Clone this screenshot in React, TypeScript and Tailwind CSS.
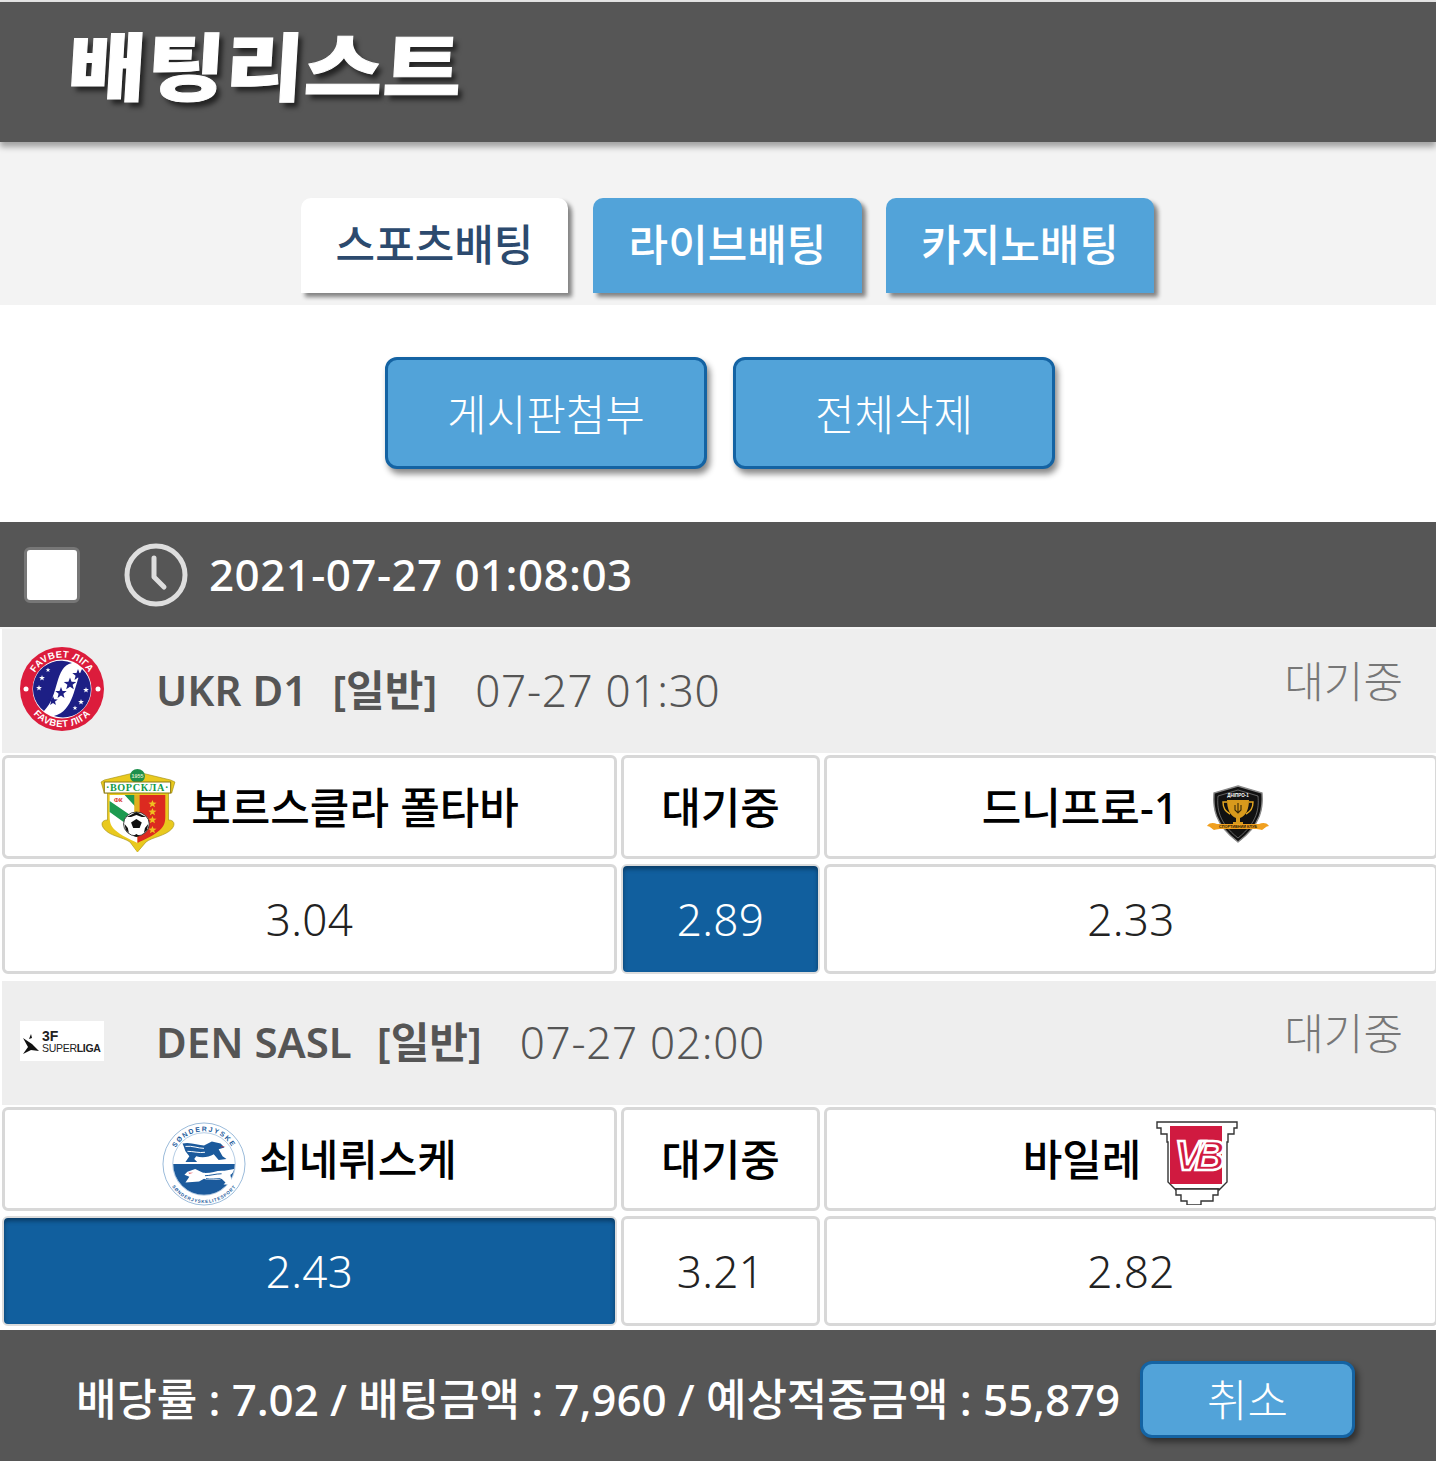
const star = (cx: number, cy: number, r: number) => {
  const pts: string[] = [];
  for (let i = 0; i < 10; i++) {
    const a = (Math.PI / 5) * i - Math.PI / 2;
    const d = i % 2 === 0 ? r : r * 0.42;
    pts.push(`${(cx + d * Math.cos(a)).toFixed(1)},${(cy + d * Math.sin(a)).toFixed(1)}`);
  }
  return pts.join(" ");
};

function FavbetLogo() {
  return (
    <svg width="84" height="84" viewBox="0 0 84 84">
      <defs>
        <path id="fav-top" d="M10.5 42a31.5 31.5 0 0 1 63 0" />
        <path id="fav-bottom" d="M4 42a38 38 0 0 0 76 0" />
      </defs>
      <circle cx="42" cy="42" r="42" fill="#dc1c3c" />
      <circle cx="42" cy="42" r="29.5" fill="#fff" />
      <path d="M24 64A28 28 0 0 1 52 16C34 20 40 48 24 64z" fill="#1d1f85" />
      <path d="M62 22A28 28 0 0 1 34 69C54 64 54 38 62 22z" fill="#1d1f85" />
      {[[33, 54, 5], [41, 46, 6], [50, 37, 6.5], [58, 28, 6]].map(([x, y, r]) => (
        <polygon key={x} points={star(x, y, r)} fill="#1d1f85" />
      ))}
      {[[22, 31, 3], [28, 23, 2.5], [19, 41, 3], [66, 43, 3], [61, 55, 3], [55, 61, 2.5]].map(([x, y, r]) => (
        <polygon key={x} points={star(x, y, r)} fill="#fff" />
      ))}
      <text fontFamily="Liberation Sans" fontSize="9.5" fontWeight="700" fill="#fff" letterSpacing="0.4">
        <textPath href="#fav-top" startOffset="50%" textAnchor="middle">FAVBET ЛІГА</textPath>
      </text>
      <text fontFamily="Liberation Sans" fontSize="9.5" fontWeight="700" fill="#fff" letterSpacing="0.4">
        <textPath href="#fav-bottom" startOffset="50%" textAnchor="middle">FAVBET ЛІГА</textPath>
      </text>
      <circle cx="6" cy="42" r="2.5" fill="#fff" />
      <circle cx="78" cy="42" r="2.5" fill="#fff" />
    </svg>
  );
}

function VorsklaLogo() {
  return (
    <svg width="76" height="84" viewBox="3 0 71 84" preserveAspectRatio="none">
      <path d="M7 12 38 4l31 8 4 2-3 11h-3v27c5 0 7 4 3 9-6 7-18 8-24 13l-8 10-7-10c-7-5-19-6-24-13-4-5-2-9 3-9V25H7L4 14z" fill="#e9c91e" stroke="#a08c10" strokeWidth="0.6" />
      <circle cx="38" cy="8" r="7" fill="#1d8f4c" />
      <text x="38" y="10" fontFamily="Liberation Sans" fontSize="5" fontWeight="700" fill="#d8e8c0" textAnchor="middle">1955</text>
      <rect x="7" y="14" width="62" height="11" fill="#fff" stroke="#8c7a10" strokeWidth="1" />
      <text x="38" y="23" fontFamily="Liberation Serif" fontSize="9.5" fontWeight="700" fill="#129a48" textAnchor="middle" letterSpacing="0.6">·ВОРСКЛА·</text>
      <path d="M12 27h26v48c-7-4-15-7-21-13-4-4-5-8-5-13z" fill="#fff" />
      <path d="M38 27h26v22c0 5-1 9-5 13-6 6-14 9-21 13z" fill="#dc2a20" />
      <path d="M12 33 38 52v12L12 44zM26 27h12v14z" fill="#1d9a50" />
      <rect x="35" y="27" width="5" height="18" fill="#e0b020" />
      {[36, 44, 52, 62].map((y) => (
        <polygon key={y} points={star(52, y, 4)} fill="#f0c020" />
      ))}
      <text x="20" y="34" fontFamily="Liberation Sans" fontSize="5.5" fontWeight="700" fill="#dc2a20" textAnchor="middle">ФК</text>
      <circle cx="37" cy="56" r="12" fill="#fff" stroke="#222" strokeWidth="0.8" />
      <polygon points="37,51 42,54.5 40,60 34,60 32,54.5" fill="#111" />
      <path d="M37 44v3l-5 2-4 0zM37 44v3l5 2 4 0zM26 56l3 4 1 5-3-3zM48 56l-3 4-1 5 3-3zM34 68l3-2 3 2-3 1z" fill="#111" />
      <path d="M38 84l-5-8h10z" fill="#e9c91e" />
    </svg>
  );
}

function DniproLogo() {
  return (
    <svg width="64" height="58" viewBox="0 0 64 58">
      <path d="M32 1 56 8c1 14 0 31-24 49C8 39 7 22 8 8z" fill="#111" stroke="#888" strokeWidth="1.4" />
      <path d="M32 5 52 11c1 12 0 26-20 42C12 37 11 23 12 11z" fill="none" stroke="#999" strokeWidth="0.6" />
      <text x="32" y="11.5" fontFamily="Liberation Sans" fontSize="4.5" fontWeight="700" fill="#fff" textAnchor="middle">ДНІПРО-1</text>
      <path d="M21 15h22c0 9-3 16-9 18v4h3v2H27v-2h3v-4c-6-2-9-9-9-18z" fill="#d89a1c" />
      <path d="M21 17h-4c0 6 3 10 7 12M43 17h4c0 6-3 10-7 12" fill="none" stroke="#e6a820" strokeWidth="1.4" />
      <path d="M32 18v10M29 20v5l3 3 3-3v-5" fill="none" stroke="#3a2a08" strokeWidth="1.1" />
      <path d="M1 41c3-4 7-3 10-2h42c3-1 7-2 10 2-3 0-5 3-7 4-3-1-5-1-7-1H15c-2 0-4 0-7 1-2-1-4-4-7-4z" fill="#f0a020" />
      <text x="32" y="43" fontFamily="Liberation Sans" fontSize="3.8" fontWeight="700" fill="#2a1a00" textAnchor="middle">СПОРТИВНИЙ КЛУБ</text>
    </svg>
  );
}

function SuperligaLogo() {
  return (
    <div className="flex h-10 w-[84px] items-center bg-white pl-0.5">
      <svg width="18" height="20" viewBox="0 0 18 20" className="mt-1.5 shrink-0">
        <path d="M1 4l9 6 7 7-8-1-8 4 5-7zM9 0l1 4-3 1z" fill="#111" />
      </svg>
      <div className="ml-0.5 flex flex-col font-['Liberation_Sans',sans-serif] text-[#222]">
        <span className="text-[14px] leading-[14px] font-black">3F</span>
        <span className="text-[10.5px] leading-[11px] tracking-[-0.3px]">SUPER<b>LIGA</b></span>
      </div>
    </div>
  );
}

function SonderjyskeLogo() {
  return (
    <svg width="84" height="84" viewBox="0 0 86 86">
      <defs>
        <path id="son-top" d="M9.5 43a33.5 33.5 0 0 1 67 0" />
        <path id="son-bottom" d="M3 43a40 40 0 0 0 80 0" />
      </defs>
      <circle cx="43" cy="43" r="42" fill="#fff" stroke="#7fa8d0" strokeWidth="0.8" />
      <circle cx="43" cy="43" r="32" fill="#fff" stroke="#7fa8d0" strokeWidth="0.6" />
      <path d="M11.5 43h63a31.5 31.5 0 0 1-63 0z" fill="#1b5a9c" />
      <path d="M21 22c8-2 16 2 22 2l8-4 9 2 4 4-6 2 4 7 4 3-8 1-5-6c-5 3-12 4-18 2l-2 3 3 3H24l4-6-4-5c-1-3-2-6-3-8z" fill="#1b5a9c" />
      <path d="M24 25c7-1 13 2 19 2M26 30c6 0 12 2 18 1" fill="none" stroke="#fff" strokeWidth="1" />
      <path d="M60 25h5l-4 1z" fill="#e0303a" />
      <path d="M64 50c-8-1-14 3-22 2l-8-4-8 3-3 3 5 2-4 6 14-1 5-3c6 2 14 2 18 0l4 4-2 2h-10 20l-2-5-1-5c2-1 3-3 4-6z" fill="#fff" />
      <path d="M61 53c-6 0-12 2-17 2M60 58c-5 0-10 1-15 0" fill="none" stroke="#1b5a9c" strokeWidth="1" />
      <path d="M27 52h5l-4 1z" fill="#e0303a" />
      <text fontFamily="Liberation Sans" fontSize="7" fontWeight="700" fill="#1b5a9c" letterSpacing="1.6">
        <textPath href="#son-top" startOffset="50%" textAnchor="middle">SØNDERJYSKE</textPath>
      </text>
      <text fontFamily="Liberation Sans" fontSize="4.6" fontWeight="700" fill="#1b5a9c" letterSpacing="0.8">
        <textPath href="#son-bottom" startOffset="50%" textAnchor="middle">SØNDERJYSKELITESPORT</textPath>
      </text>
    </svg>
  );
}

function VejleLogo() {
  return (
    <svg width="84" height="84" viewBox="0 0 84 84">
      <path d="M2 1h80v6h-3v6h-6v8h-1v40l-8 8v-1H21v1l-8-8V21h-1v-8H6V7H2z" fill="#fff" stroke="#333" strokeWidth="1.4" />
      <path d="M21 68h42v6h-5v6H46v4H32v-4H26v-6h-5z" fill="#fff" stroke="#333" strokeWidth="1.4" />
      <rect x="15" y="5" width="52" height="58" fill="#d01a40" />
      <text x="41" y="49" fontFamily="Liberation Sans" fontSize="42" fontWeight="700" fontStyle="italic" fill="#d01a40" stroke="#fff" strokeWidth="2.6" textAnchor="middle" letterSpacing="-8">VB</text>
    </svg>
  );
}

function ClockIcon() {
  return (
    <svg width="64" height="64" viewBox="0 0 64 64" fill="none" stroke="#dedede">
      <circle cx="32" cy="32" r="29" strokeWidth="5" />
      <path d="M30 15v19l10 10" strokeWidth="5" strokeLinecap="round" strokeLinejoin="round" />
    </svg>
  );
}

function Odd({ value, on }: { value: string; on?: boolean }) {
  return (
    <div
      className={
        on
          ? "flex h-[110px] items-center justify-center rounded-md border-2 border-[#dcdcdc] bg-[#115f9e] text-[44px] font-light tracking-[0.4px] text-white shadow-[inset_0_3px_4px_#0a3c66]"
          : "flex h-[110px] items-center justify-center rounded-md border-[3px] border-[#d8d8d8] bg-white text-[44px] font-light tracking-[0.4px] text-[#222]"
      }
    >
      {value}
    </div>
  );
}

function Team({ children }: { children: React.ReactNode }) {
  return (
    <div className="flex h-[104px] items-center justify-center rounded-md border-[3px] border-[#d8d8d8] bg-white pt-0.5 text-[43px] font-medium text-black">
      {children}
    </div>
  );
}

function League({ logo, name, time }: { logo: React.ReactNode; name: string; time: string }) {
  return (
    <div className="ml-0.5 flex h-[124px] items-start bg-[#eeeeee] pt-[18px] pl-[18px]">
      <div className="flex h-[84px] w-[84px] items-center justify-center">{logo}</div>
      <div className="mt-[15px] ml-[52px] flex items-center text-[42px] leading-[56px] text-[#555555]">
        <span className="font-semibold">{name}</span>
        <span className="ml-[25px] font-semibold">[일반]</span>
        <span className="ml-[38px] text-[44px] font-light tracking-[0.7px]">{time}</span>
      </div>
      <span className="mt-[7px] mr-[33px] ml-auto text-[43px] leading-[56px] font-light text-[#777777]">대기중</span>
    </div>
  );
}

export default function App() {
  return (
    <div className="h-[1461px] w-[1436px] overflow-hidden bg-white font-['Noto_Sans','Noto_Sans_CJK_KR',sans-serif] text-[43px]">
      <div className="h-0.5 bg-[#e4e4e4]" />
      <header className="relative z-10 flex h-[140px] items-start bg-[#565656] pt-[19px] pl-[68px] shadow-[0_5px_6px_#0005]">
        <h1 className="origin-left -skew-x-3 scale-x-[1.15] text-[74px] leading-[92px] font-black tracking-[0.5px] text-white [-webkit-text-stroke:1px_white] [text-shadow:4px_5px_5px_#0009]">
          배팅리스트
        </h1>
      </header>

      <div className="flex h-[163px] justify-center gap-6 bg-[#f3f3f3] pt-14 pl-[19px] font-medium">
        <div className="mr-px flex h-[95px] w-[267px] items-center justify-center rounded-t-[10px] bg-white text-[#2c4a6e] shadow-[4px_4px_4px_#0007]">스포츠배팅</div>
        <div className="flex h-[95px] w-[269px] items-center justify-center rounded-t-[10px] bg-[#52a3d9] text-white shadow-[4px_4px_4px_#0007]">라이브배팅</div>
        <div className="flex h-[95px] w-[268px] items-center justify-center rounded-t-[10px] bg-[#52a3d9] text-white shadow-[4px_4px_4px_#0007]">카지노배팅</div>
      </div>

      <div className="flex h-[217px] justify-center gap-[26px] pt-[52px] pl-[4px]">
        <button className="h-[112px] w-[322px] rounded-xl border-[3px] border-[#1463a3] bg-[#52a3d9] pt-1 font-light text-white shadow-[3px_5px_6px_#0007]">게시판첨부</button>
        <button className="h-[112px] w-[322px] rounded-xl border-[3px] border-[#1463a3] bg-[#52a3d9] pt-1 font-light text-white shadow-[3px_5px_6px_#0007]">전체삭제</button>
      </div>

      <div className="flex h-[105px] items-center bg-[#565656] pl-6 text-[44px] font-medium tracking-[0.4px] text-white">
        <div className="h-14 w-14 rounded-md border-[3px] border-[#777777] bg-white" />
        <div className="ml-11 flex h-16 w-16 items-center justify-center">
          <ClockIcon />
        </div>
        <span className="ml-[21px] -mt-0.5">2021-07-27 01:08:03</span>
      </div>

      <div className="h-0.5 bg-[#f5f5f5]" />
      <League logo={<FavbetLogo />} name="UKR D1" time="07-27 01:30" />
      <div className="mt-0.5 ml-0.5 grid w-[1440px] grid-cols-[615px_199px_614px] gap-x-1 gap-y-[5px]">
        <Team>
          <span className="mt-1">
            <VorsklaLogo />
          </span>
          <span className="ml-[15px]">보르스클라 폴타바</span>
        </Team>
        <Team>대기중</Team>
        <Team>
          <span>드니프로-1</span>
          <span className="mt-3 mr-2.5 ml-7">
            <DniproLogo />
          </span>
        </Team>
        <Odd value="3.04" />
        <Odd value="2.89" on />
        <Odd value="2.33" />
      </div>

      <div className="h-[7px]" />
      <League logo={<SuperligaLogo />} name="DEN SASL" time="07-27 02:00" />
      <div className="mt-0.5 ml-0.5 grid w-[1440px] grid-cols-[615px_199px_614px] gap-x-1 gap-y-[5px]">
        <Team>
          <span className="mt-2">
            <SonderjyskeLogo />
          </span>
          <span className="ml-[13px]">쇠네뤼스케</span>
        </Team>
        <Team>대기중</Team>
        <Team>
          <span>바일레</span>
          <span className="mt-1.5 ml-3.5">
            <VejleLogo />
          </span>
        </Team>
        <Odd value="2.43" on />
        <Odd value="3.21" />
        <Odd value="2.82" />
      </div>

      <footer className="mt-1 flex h-[131px] items-center bg-[#565656] pt-2 pl-[76px] text-[44px] font-medium tracking-[-0.1px] text-white">
        <span className="-mt-0.5 w-[1064px] whitespace-nowrap">배당률 : 7.02 / 배팅금액 : 7,960 / 예상적중금액 : 55,879</span>
        <button className="h-[77px] w-[215px] rounded-xl border-[3px] border-[#1463a3] bg-[#52a3d9] font-light shadow-[3px_4px_6px_#0007]">취소</button>
      </footer>
    </div>
  );
}
